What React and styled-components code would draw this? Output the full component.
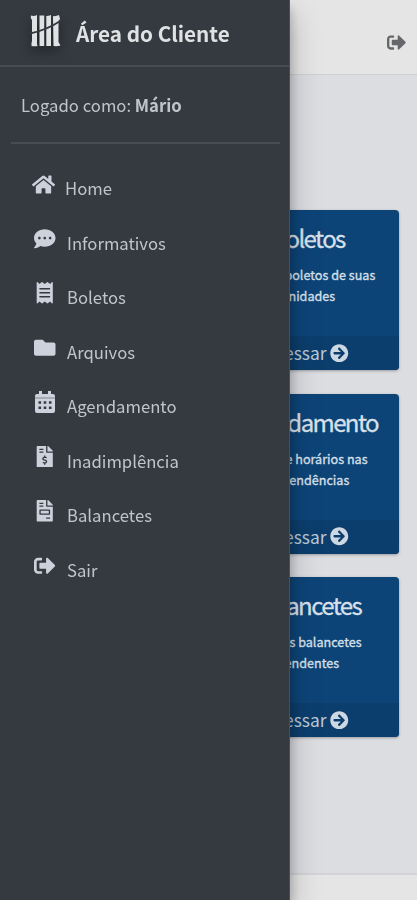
import React from "react";
import styled, { createGlobalStyle } from "styled-components";
import {
  FaHome, FaCommentDots, FaReceipt, FaFolder,
  FaFileInvoiceDollar, FaFileInvoice, FaSignOutAlt, FaArrowCircleRight,
} from "react-icons/fa";

const GlobalStyle = createGlobalStyle`
  * { box-sizing: border-box; }
  body {
    margin: 0;
    font-family: "Noto Sans CJK SC", "Noto Sans", sans-serif;
    overflow: hidden;
  }
`;

const Page = styled.div`
  height: 900px;
  display: flex;
  flex-direction: column;
  background: #dbdde1;
  overflow: hidden;
`;

const TopBar = styled.header`
  height: 75px;
  flex: none;
  display: flex;
  justify-content: flex-end;
  align-items: flex-start;
  padding: 33px 11px 0 0;
  background: #e5e5e5;
  border-bottom: 1px solid #cfd1d4;
  color: #65676a;
  font-size: 19px;
`;

const Content = styled.main`
  flex: 1;
  display: flex;
  flex-direction: column;
  align-items: flex-end;
  gap: 23.5px;
  padding: 135px 18px 0 0;
`;

const Footer = styled.footer`
  height: 27px;
  flex: none;
  background: #e5e5e5;
  border-top: 2px solid #d1d3d6;
`;

const Card = styled.section`
  width: 182px;
  height: 160px;
  display: flex;
  flex-direction: column;
  border-radius: 4px;
  overflow: hidden;
  background: #0d4478;
  color: #d9e0ea;
  text-align: center;
  white-space: nowrap;
  box-shadow: 0 1px 3px rgba(0, 0, 0, 0.3);
`;

const CardTitle = styled.h2`
  margin: 12px 0 0;
  height: 32px;
  font-size: 24px;
  font-weight: 400;
  line-height: 32px;
  letter-spacing: -1.6px;
  -webkit-text-stroke: 0.3px currentColor;
`;

const CardText = styled.p`
  margin: 10px 0 0;
  flex: 1;
  font-size: 12.6px;
  font-weight: 400;
  line-height: 21px;
  -webkit-text-stroke: 0.3px currentColor;
`;

const CardLink = styled.div`
  height: 34px;
  display: flex;
  justify-content: center;
  align-items: center;
  gap: 4px;
  padding-right: 2px;
  background: #0c3e6d;
  color: #bdcad9;
  font-size: 17.4px;
  line-height: 34px;

  svg { font-size: 18.5px; color: #ced8e3; }
`;

const Drawer = styled.aside`
  position: fixed;
  top: 0;
  left: 0;
  width: 290px;
  height: 900px;
  background: #353a40;
  border-right: 1px solid #4b4f54;
  box-shadow: 0 14px 28px rgba(0, 0, 0, 0.25), 0 8px 10px rgba(0, 0, 0, 0.22);
  color: #c0c5cd;
`;

const Brand = styled.div`
  height: 67px;
  display: flex;
  align-items: flex-start;
  padding: 14px 0 0 30px;
  border-bottom: 2px solid #474c53;
`;

const LogoMark = styled.svg`
  width: 31px;
  height: 34px;
  overflow: visible;
  filter: drop-shadow(0 6px 6px rgba(0, 0, 0, 0.4));
`;

const BrandName = styled.strong`
  margin-left: 15px;
  color: #dfe1e3;
  font-size: 20.7px;
  font-weight: 700;
  line-height: 38px;
  white-space: nowrap;
`;

const UserLine = styled.div`
  height: 77px;
  margin: 0 9px 0 11px;
  padding: 24px 0 0 10px;
  border-bottom: 2px solid #484d54;
  font-size: 16.7px;
  line-height: 28px;
  white-space: nowrap;
`;

const Menu = styled.nav`
  display: flex;
  flex-direction: column;
  padding-top: 17px;
`;

const MenuItem = styled.a`
  height: 54.5px;
  display: flex;
  align-items: flex-start;
  padding-left: 31px;
  font-size: 16.7px;
`;

const IconSlot = styled.span`
  width: ${(p) => (p.$narrow ? 24 : 28)}px;
  height: 46px;
  display: flex;
  justify-content: center;
  align-items: center;
  color: #ccd2dc;
  font-size: ${(p) => (p.$narrow ? 23 : 21.5)}px;
`;

const MenuLabel = styled.span`
  margin-left: ${(p) => (p.$narrow ? 10 : 8)}px;
  line-height: 54px;
`;

function CalendarIcon() {
  return (
    <svg width="20" height="22" viewBox="0 0 20 22" fill="currentColor">
      <path d="M4 0h3v3h6V0h3v3h2a2 2 0 0 1 2 2v1.800H0V5a2 2 0 0 1 2-2h2z" />
      <path
        fillRule="evenodd"
        d="M0 7.300h20V20a2 2 0 0 1-2 2H2a2 2 0 0 1-2-2zM3.500 10.200v2.600h2.600v-2.600zM8.700 10.200v2.600h2.600v-2.600zM13.900 10.200v2.600h2.600v-2.600zM3.500 15.400v2.600h2.600v-2.600zM8.700 15.400v2.600h2.600v-2.600zM13.900 15.400v2.600h2.600v-2.600z"
      />
    </svg>
  );
}

const menu = [
  { label: "Home", icon: FaHome, narrow: true },
  { label: "Informativos", icon: FaCommentDots },
  { label: "Boletos", icon: FaReceipt },
  { label: "Arquivos", icon: FaFolder },
  { label: "Agendamento", icon: CalendarIcon },
  { label: "Inadimplência", icon: FaFileInvoiceDollar },
  { label: "Balancetes", icon: FaFileInvoice },
  { label: "Sair", icon: FaSignOutAlt },
];

const cards = [
  { title: "Boletos", lines: ["Veja os boletos de suas", "unidades"] },
  { title: "Agendamento", lines: ["Agende horários nas", "dependências"] },
  { title: "Balancetes", lines: ["Veja os balancetes", "pendentes"] },
];

function Logo() {
  return (
    <LogoMark viewBox="0 0 31 34">
      <g fill="#dfe1e3">
        <path d="M1 1.500q3 1 6-.5v29.500l.7 1.500q-3 .5-6.200 0v-3l.5-2V6L.8 4z" />
        <path d="M9.500 1.500h4.700v30.500H9.500z" />
        <path d="M16.300 2q2.500 0 4.700-1v31h-4.700z" />
        <path d="M23 2q3 .5 6-1l1 4-1.500 2v21l2 3.500q-3 1-7 .5z" />
      </g>
      <path d="M0 19.500Q17 16 31 6.500" fill="none" stroke="#353a40" strokeWidth="1.800" />
    </LogoMark>
  );
}

export default function App() {
  return (
    <>
      <GlobalStyle />
      <Page>
        <TopBar><FaSignOutAlt /></TopBar>
        <Content>
          {cards.map((c) => (
            <Card key={c.title}>
              <CardTitle>{c.title}</CardTitle>
              <CardText>{c.lines[0]}<br />{c.lines[1]}</CardText>
              <CardLink>Acessar <FaArrowCircleRight /></CardLink>
            </Card>
          ))}
        </Content>
        <Footer />
      </Page>
      <Drawer>
        <Brand><Logo /><BrandName>Área do Cliente</BrandName></Brand>
        <UserLine>Logado como: <b>Mário</b></UserLine>
        <Menu>
          {menu.map(({ label, icon: Icon, narrow }) => (
            <MenuItem key={label}>
              <IconSlot $narrow={narrow}><Icon /></IconSlot>
              <MenuLabel $narrow={narrow}>{label}</MenuLabel>
            </MenuItem>
          ))}
        </Menu>
      </Drawer>
    </>
  );
}
